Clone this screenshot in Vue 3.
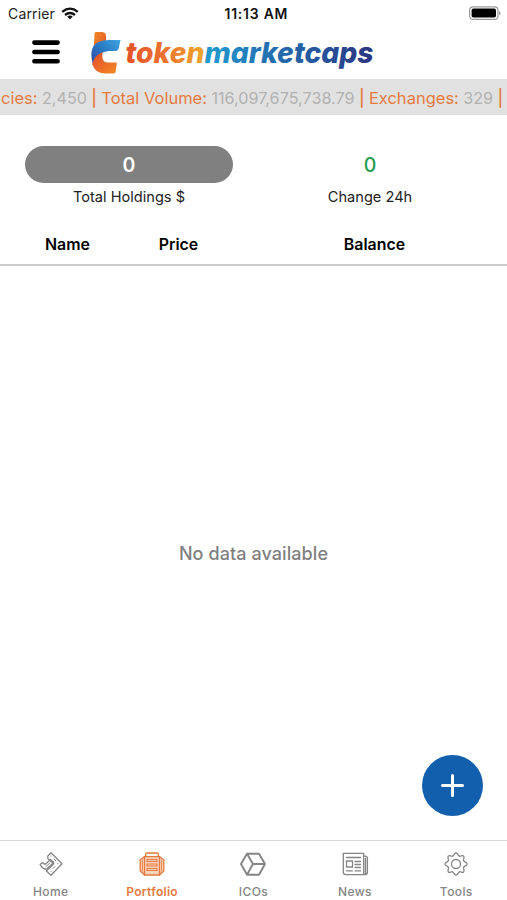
<script setup>
const ticker = [
  { label: 'cies:', value: '2,450' },
  { label: 'Total Volume:', value: '116,097,675,738.79' },
  { label: 'Exchanges:', value: '329' },
]
const tabs = ['Home', 'Portfolio', 'ICOs', 'News', 'Tools']
const active = 'Portfolio'
</script>

<template>
  <div class="screen">
    <div class="status">
      <div class="carrier">
        <span>Carrier</span>
        <svg width="18" height="13" viewBox="0 0 18 13" fill="none" stroke="#111" stroke-width="2.3">
          <path d="M1.2 4.8Q9-1.5 16.8 4.8" />
          <path d="M4 8Q9 4 14 8" />
          <path d="M9 12.4L6.2 9.6Q9 7.6 11.8 9.6Z" fill="#111" stroke="none" />
        </svg>
      </div>
      <div class="time">11:13 AM</div>
      <svg class="battery" width="33" height="15" viewBox="0 0 33 15">
        <rect x="1.6" y="0.8" width="28.4" height="12.6" rx="3.5" fill="#fff" stroke="#999" stroke-width="1.2" />
        <rect x="3.6" y="2.6" width="24.4" height="9" rx="1.8" fill="#000" />
        <path d="M31 5Q32.6 5.800 32.6 7.100T31 9.200Z" fill="#999" />
      </svg>
    </div>

    <header class="header">
      <svg class="menu" width="28" height="24" viewBox="0 0 28 24" stroke="#000" stroke-width="4.6" stroke-linecap="round">
        <path d="M2.4 2.6H25.6M2.4 12H25.6M2.4 21.2H25.6" />
      </svg>
      <svg class="logo" width="290" height="48" viewBox="0 0 290 48">
        <defs>
          <linearGradient id="word" gradientUnits="userSpaceOnUse" x1="36" y1="0" x2="283" y2="0">
            <stop offset="0" stop-color="#e4522b" />
            <stop offset="0.15" stop-color="#eb7030" />
            <stop offset="0.31" stop-color="#efa52c" />
            <stop offset="0.325" stop-color="#229bd0" />
            <stop offset="0.55" stop-color="#2374b4" />
            <stop offset="0.8" stop-color="#27529a" />
            <stop offset="1" stop-color="#2b3580" />
          </linearGradient>
          <linearGradient id="stem" x1="0" y1="0" x2="1" y2="1">
            <stop offset="0" stop-color="#f18a24" />
            <stop offset="1" stop-color="#e5532b" />
          </linearGradient>
          <linearGradient id="arc" x1="1" y1="0" x2="0" y2="1">
            <stop offset="0" stop-color="#3fa5e2" />
            <stop offset="0.5" stop-color="#2879c3" />
            <stop offset="1" stop-color="#34449b" />
          </linearGradient>
          <linearGradient id="foot" x1="0" y1="0" x2="1" y2="1">
            <stop offset="0" stop-color="#e24a2a" />
            <stop offset="1" stop-color="#f58b26" />
          </linearGradient>
        </defs>
        <path d="M4.500 4.5Q4.500 3 6 3H12.5Q16 3.4 16 7V14L3.6 22Z" fill="url(#stem)" />
        <path d="M2.500 34Q-1 20 6 14.5Q10.5 11 19 11H30.5L28.7 19.5Q28 22 25.3 22H19Q7 23 2.800 36Z" fill="url(#arc)" />
        <path d="M2.3 35Q4.5 26 12.5 23.2Q10.8 32.8 17.5 33.600H26.8L25.9 41.7Q25.6 44.500 23.4 44.500H15Q4.5 44 2.3 35Z" fill="url(#foot)" />
        <text class="word" x="35.5" y="34.4" textLength="248" lengthAdjust="spacingAndGlyphs" fill="url(#word)">tokenmarketcaps</text>
      </svg>
    </header>

    <div class="ticker">
      <template v-for="t in ticker" :key="t.label">
        <span class="label">{{ t.label }}</span>
        <span class="value">{{ t.value }}</span>
        <span class="label bar">|</span>
      </template>
    </div>

    <section class="summary">
      <div class="stat holdings">
        <div class="pill">0</div>
        <div class="caption">Total Holdings $</div>
      </div>
      <div class="stat change">
        <div class="delta">0</div>
        <div class="caption">Change 24h</div>
      </div>
    </section>

    <div class="columns">
      <span>Name</span>
      <span>Price</span>
      <span>Balance</span>
    </div>

    <main class="empty">
      <p>No data available</p>
      <button class="add" aria-label="Add">
        <svg width="25" height="25" viewBox="0 0 25 25" stroke="#fff" stroke-width="3" stroke-linecap="round">
          <path d="M12.5 2.5V22.5M2.5 12.5H22.5" />
        </svg>
      </button>
    </main>

    <nav class="tabs">
      <div v-for="t in tabs" :key="t" class="tab" :class="{ active: t === active }">
        <svg width="28" height="26" viewBox="0 0 28 26" fill="none" stroke="currentColor" stroke-width="1.3" stroke-linejoin="round" stroke-linecap="round">
          <template v-if="t === 'Home'">
            <path d="M10.8 5L14 1.8L25 12.8L14 24.2L9.3 20L16.8 12.8L10.8 7.6Z" />
            <path d="M3.2 13.6L5.4 11.6L8 13.6L13.5 8.5L16.7 11.5L9.5 18.2Q6 18.5 3.2 13.6Z" />
            <path d="M14 5V5.2M20.8 12.5V12.8M14 20.3V20.5M17 8L19 10M18 15.5L16 17.5M9 15.5L13 11.8" stroke-width="1" />
          </template>
          <template v-else-if="t === 'Portfolio'">
            <path d="M6.5 5.600H21.5L25.8 9V20L21.5 24H6.5L2.2 20V9Z" fill="#fbd3b8" />
            <path d="M7.6 5.600V3Q7.6 2 9 2H19Q20.4 2 20.4 3V5.600M6.5 6V24M21.5 6V24" />
            <path d="M9 8.500H19V10.500H9ZM9 13H19V15H9ZM9 17.500H19V19.500H9Z" stroke-width="1.1" />
            <path d="M4.4 9.5V20.3M23.6 9.5V20.3" stroke-width="0.8" />
          </template>
          <template v-else-if="t === 'ICOs'">
            <path d="M8 2.7H20L26 13L20 23.7H8L2 13ZM8 2.7L14 13H26M14 13L8 23.7" stroke-width="1.9" />
          </template>
          <template v-else-if="t === 'News'">
            <path d="M2.3 2.4H22.7V23.6H4.8Q2.3 23.6 2.3 21ZM22.7 5.2H24.2Q26.4 5.2 26.4 7.5V21Q26.4 23.6 24.2 23.6H22.7M24.5 7.5V23" />
            <path d="M5.5 6.5H19.5M5.5 10H11.5V16H5.5ZM14 10.5H19.5M14 13.5H19.5M14 16.5H19.5M5.5 19.8H11.5M14 19.8H19.5" />
          </template>
          <template v-else>
            <circle cx="14" cy="13" r="4.5" />
            <path d="M14 2C16 2 15.8 4.7 17.4 5.2S20.2 3.6 21.6 5S20.9 8 21.7 9.7S25 11 25 13S22.4 14.7 21.7 16.3S23 19.6 21.6 21S19 20.2 17.4 20.8S16 24 14 24S12.2 21.4 10.6 20.8S7.8 22.4 6.4 21S7.1 18 6.3 16.3S3 15 3 13S5.6 11.3 6.3 9.7S5 6.4 6.4 5S9 5.8 10.6 5.2S12 2 14 2Z" />
          </template>
        </svg>
        <span>{{ t }}</span>
      </div>
    </nav>
  </div>
</template>

<style>
body { background: #fff; }
</style>

<style scoped>
.screen {
  width: 507px;
  height: 900px;
  display: flex;
  flex-direction: column;
  overflow: hidden;
  background: #fff;
  color: #111;
  font-family: Inter, "Liberation Sans", sans-serif;
}
.status {
  height: 27px;
  box-sizing: border-box;
  padding: 0 6px 0 8px;
  display: grid;
  grid-template-columns: 216.5px auto 1fr;
  align-items: center;
  font-size: 14px;
  line-height: 26px;
}
.carrier { display: flex; align-items: center; gap: 6px; color: #222; letter-spacing: 0.15px; }
.time { font-weight: 600; font-size: 13.9px; letter-spacing: 0.8px; }
.battery { justify-self: end; }
.header { height: 52px; display: flex; align-items: center; padding-left: 32px; }
.menu { flex: none; margin-top: -2px; }
.logo { flex: none; margin-left: 30px; }
.word {
  font-family: Inter, "Liberation Sans", sans-serif;
  font-size: 29px;
  font-weight: 800;
  font-style: italic;
  font-feature-settings: "cv11";
}
.ticker {
  height: 36px;
  flex: none;
  box-sizing: border-box;
  padding: 1px 0 0 1px;
  display: flex;
  align-items: center;
  gap: 4.4px;
  background: #e1e1e1;
  font-size: 16.5px;
  white-space: nowrap;
}
.label { color: #e77a40; }
.bar { width: 5.6px; text-align: center; font-weight: 500; }
.value { color: #b1b1b1; font-size: 16.2px; }
.summary { height: 106px; box-sizing: border-box; padding: 31px 0 0 25px; display: flex; }
.stat { display: flex; flex-direction: column; align-items: center; }
.holdings { width: 208px; }
.change { width: 274px; }
.pill {
  width: 100%;
  height: 37px;
  border-radius: 19px;
  background: #808080;
  color: #fff;
  text-align: center;
  font-size: 19.5px;
  font-weight: 600;
  line-height: 38px;
}
.delta { height: 37px; line-height: 38px; font-size: 19.5px; font-weight: 500; color: #1f9b50; }
.caption { margin-top: 4px; font-size: 14.6px; line-height: 20px; color: #222; }
.columns {
  height: 45px;
  box-sizing: border-box;
  border-bottom: 2px solid #ccc;
  padding-left: 16px;
  display: grid;
  grid-template-columns: 103px 119px 273px;
  text-align: center;
  font-size: 15.9px;
  font-weight: 600;
  line-height: 47px;
  color: #000;
}
.empty {
  flex: 1;
  position: relative;
  display: flex;
  align-items: center;
  justify-content: center;
}
.empty p { margin: 0; font-size: 18px; font-weight: 500; letter-spacing: 0.08px; color: #808080; }
.add {
  position: absolute;
  right: 24px;
  bottom: 24px;
  width: 61px;
  height: 61px;
  border: 0;
  padding: 0;
  border-radius: 50%;
  background: #125fae;
  display: flex;
  align-items: center;
  justify-content: center;
}
.tabs {
  height: 60px;
  flex: none;
  box-sizing: border-box;
  border-top: 1px solid #d8d8d8;
  display: grid;
  grid-template-columns: repeat(5, 1fr);
}
.tab {
  padding-top: 10px;
  display: flex;
  flex-direction: column;
  align-items: center;
  color: #858585;
  font-size: 12px;
  font-weight: 500;
  letter-spacing: 0.4px;
}
.tab span { margin-top: 7px; line-height: 16px; }
.active { color: #e77a40; }
.active span { font-weight: 600; letter-spacing: 0.3px; }
</style>
